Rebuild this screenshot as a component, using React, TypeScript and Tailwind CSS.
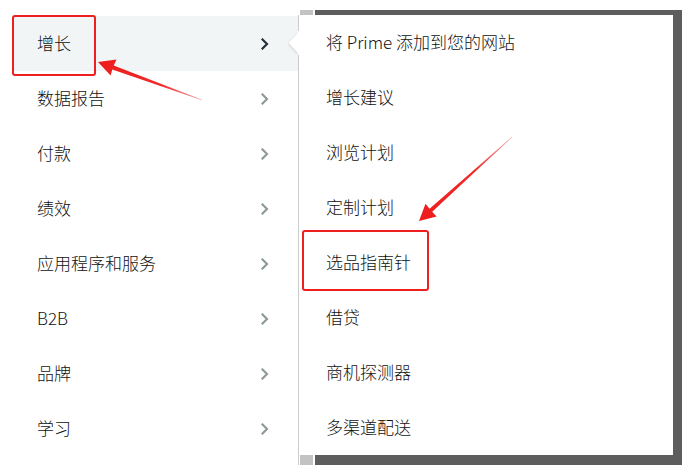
import type { ReactNode } from 'react';

const LEFT_ITEMS = ['增长', '数据报告', '付款', '绩效', '应用程序和服务', 'B2B', '品牌', '学习'];

const RIGHT_ITEMS = [
  '将 Prime 添加到您的网站',
  '增长建议',
  '浏览计划',
  '定制计划',
  '选品指南针',
  '借贷',
  '商机探测器',
  '多渠道配送',
];

function Chevron({ active }: { active: boolean }) {
  return (
    <svg width="8" height="12" viewBox="0 0 8 12" className="shrink-0">
      <path
        d="M1.5 1.5 L6 6 L1.5 10.5"
        fill="none"
        stroke={active ? '#232f3e' : '#8f9999'}
        strokeWidth="2.2"
        strokeLinecap="square"
      />
    </svg>
  );
}

// top / bottom strip of the dark frame around the flyout
function FrameBar() {
  return (
    <div className="flex h-[5px] w-full shrink-0">
      <div className="w-[2px] bg-white" />
      <div className="w-[13px] bg-[#c3c3c3]" />
      <div className="w-[2px] bg-white" />
      <div className="flex-1 bg-[#5d5d5d]" />
    </div>
  );
}

function Row({ children }: { children: ReactNode }) {
  return <div className="flex h-[55px] items-center">{children}</div>;
}

export default function App() {
  return (
    <div
      className="relative flex h-[474px] w-[693px] overflow-hidden bg-white text-[17px] font-light text-[#0f1111]"
      style={{ fontFamily: '"Noto Sans CJK SC", "Noto Sans", sans-serif' }}
    >
      {/* left nav */}
      <div className="w-[298px] shrink-0 pt-[16px]">
        {LEFT_ITEMS.map((label, i) => (
          <div
            key={label}
            className={
              i === 0
                ? 'ml-[12px] flex h-[55px] items-center justify-between bg-[#f2f5f5] pl-[25px] pr-[29px]'
                : 'ml-[12px] flex h-[55px] items-center justify-between pl-[25px] pr-[29px]'
            }
          >
            <span className="-translate-y-px leading-none">{label}</span>
            <Chevron active={i === 0} />
          </div>
        ))}
      </div>

      {/* flyout */}
      <div className="relative mt-[10px] flex h-[455px] w-[384px] shrink-0 flex-col">
        <FrameBar />
        <div className="flex flex-1">
          <div className="flex-1 border-l border-[#cccccc] bg-white pl-[27px]">
            {RIGHT_ITEMS.map((label) => (
              <Row key={label}>
                <span className="-translate-y-px leading-none">{label}</span>
              </Row>
            ))}
          </div>
          <div className="w-[9px] bg-[#5d5d5d]" />
        </div>
        <div className="flex h-[10px]">
          <div className="w-[2px] border-l border-[#cccccc] bg-white" />
          <div className="w-[13px] bg-[#c3c3c3]" />
          <div className="w-[2px] bg-white" />
          <div className="flex-1 bg-[#5d5d5d]" />
        </div>

        {/* notch pointing at the active item */}
        <svg
          width="14"
          height="24"
          viewBox="0 0 14 24"
          className="absolute left-[-10px] top-[21px]"
        >
          <defs>
            <filter id="nshadow" x="-50%" y="-50%" width="200%" height="200%">
              <feDropShadow dx="-1" dy="1" stdDeviation="1.2" floodColor="#000" floodOpacity="0.12" />
            </filter>
          </defs>
          <path d="M11 1 L1 12 L11 23 Z" fill="#ffffff" filter="url(#nshadow)" />
          <rect x="10" y="0" width="4" height="24" fill="#ffffff" />
        </svg>
      </div>

      {/* annotation boxes */}
      <div className="pointer-events-none absolute left-[12px] top-[15px] h-[61px] w-[84px] rounded-[3px] border-2 border-[#f01f1f]" />
      <div className="pointer-events-none absolute left-[302px] top-[230px] h-[61px] w-[127px] rounded-[3px] border-2 border-[#f01f1f]" />

      {/* annotation arrows */}
      <svg
        width="693"
        height="474"
        viewBox="0 0 693 474"
        className="pointer-events-none absolute inset-0"
      >
        <defs>
          <linearGradient id="a1" gradientUnits="userSpaceOnUse" x1="98" y1="62" x2="202" y2="100">
            <stop offset="0" stopColor="#ee1c1c" />
            <stop offset="0.6" stopColor="#f02a2a" />
            <stop offset="1" stopColor="#f7a0a0" />
          </linearGradient>
          <linearGradient id="a2" gradientUnits="userSpaceOnUse" x1="419" y1="221" x2="512" y2="137">
            <stop offset="0" stopColor="#ee1c1c" />
            <stop offset="0.6" stopColor="#f02a2a" />
            <stop offset="1" stopColor="#f7a0a0" />
          </linearGradient>
        </defs>
        <polygon
          points="98,62 116.5,59.5 113.7,65.6 202.1,99.7 201.9,100.3 112.3,69.4 110.6,75.5"
          fill="url(#a1)"
        />
        <polygon
          points="419,221 436.6,216.5 432.2,211.8 512.2,137.2 511.8,136.8 429.6,208.8 425.5,203.8"
          fill="url(#a2)"
        />
      </svg>
    </div>
  );
}
